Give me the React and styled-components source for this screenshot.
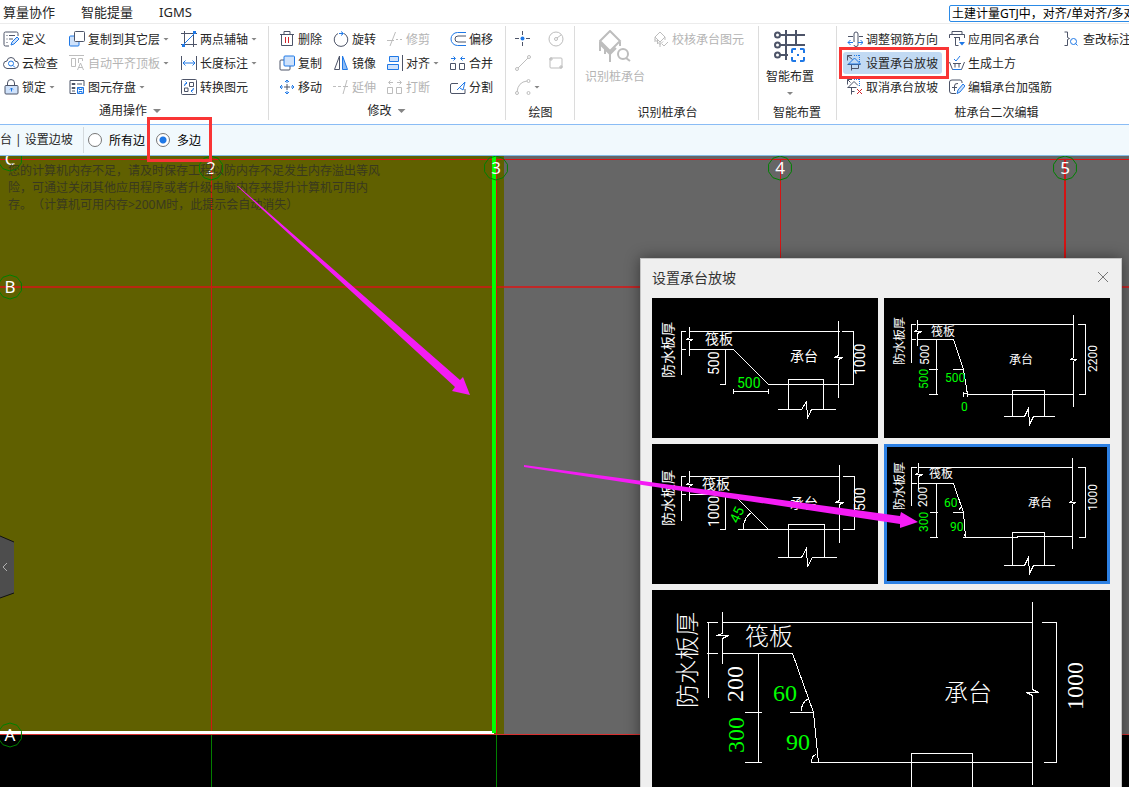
import React, { useState } from 'react';
import styled, { createGlobalStyle, css } from 'styled-components';

const DARK = '#4d5468';
const BLUE = '#1f78e6';
const PALE = '#cfe2fb';
const GREY = '#bdbdbd';

const ICONS = {
  define: (
    <>
      <path d="M15 5V2.500Q15 1 13.500 1h-11Q1 1 1 2.500v11Q1 15 2.500 15H6" stroke={DARK} />
      <path d="M3.500 4.500h1M6 4.500h6M3.500 8h1M6 8h4M3.500 11.500h1" stroke={DARK} />
      <path d="M8 14l1-3 5-5 2 2-5 5z" stroke={BLUE} fill={PALE} />
    </>
  ),
  cloud: (
    <>
      <path d="M4 13.500Q0.500 13 0.500 9.500T4 6Q4.500 2.500 8 2.500T12 6Q15.500 6 15.500 9.500T12 13.500z" stroke={DARK} />
      <circle cx="8" cy="8.500" r="2.500" stroke={BLUE} />
      <path d="M10 10.500l2 2" stroke={BLUE} />
    </>
  ),
  lock: (
    <>
      <path d="M4.500 7V4Q4.500 0.500 8 0.500T11.500 4v3" stroke={DARK} />
      <rect x="2" y="6.500" width="13" height="8.500" rx="1" stroke={DARK} fill={PALE} />
      <path d="M8.500 12.500V9M7 10.500L8.500 9 10 10.500" stroke={BLUE} />
    </>
  ),
  copy: (
    <>
      <path d="M5 5H2Q1 5 1 6v8q0 1 1 1h8q1 0 1-1v-3" stroke={DARK} fill="none" />
      <rect x="5" y="1" width="10.500" height="10" rx="1" stroke={BLUE} fill={PALE} />
    </>
  ),
  copyFloor: (
    <>
      <rect x="0.500" y="5" width="9.500" height="10" rx="1" stroke={BLUE} fill={PALE} />
      <rect x="5.500" y="0.500" width="10" height="10" rx="1" stroke={DARK} fill="#fff" />
    </>
  ),
  alignTop: (
    <>
      <path d="M0 0.500h15M2.500 3.500h4v8h-4zM9.500 8V3.500h4V6" stroke={GREY} />
      <path d="M8.500 15l3-7 3 7M9.500 12.500h4" stroke={GREY} />
    </>
  ),
  save: (
    <>
      <path d="M15 7V1.500H1v13h6" stroke={DARK} />
      <path d="M3 4.500h3v1H3zM3 8.500h3v1H3zM8 5h5M8 9h2M3 12h3" stroke={DARK} />
      <path d="M8.500 8.500h6v6h-6zM10 8.500v2h3v-2M10 14.500v-2h3v2" stroke={BLUE} />
    </>
  ),
  axis: (
    <>
      <path d="M3.500 0v16M12.500 0v16M0 2.500h16M0 13.500h16" stroke={DARK} />
      <path d="M2 14L14 2" stroke={BLUE} />
      <path d="M1 13h3v3H1zM12 0h3v3h-3z" fill={BLUE} stroke="none" />
    </>
  ),
  measure: (
    <>
      <path d="M0.500 1v14M15.500 1v14" stroke={DARK} />
      <path d="M2 8h12M4.500 5.500L2 8l2.500 2.500M11.500 5.500L14 8l-2.500 2.500" stroke={BLUE} />
    </>
  ),
  convert: (
    <>
      <rect x="0.500" y="0.500" width="15" height="15" rx="1" stroke={DARK} />
      <path d="M8.500 3.500h4v4h-4zM3.500 9h3.500v3.500H3.500z" stroke={DARK} />
      <path d="M3.500 7q0-3 2.500-3M4.500 2.500L6 4 4.500 5.500M12.500 9q0 3-2.500 3M11.500 10.500L10 12l1.500 1.500" stroke={BLUE} />
    </>
  ),
  trash: (
    <>
      <path d="M1 3.500h14M5 3.500V0.500h6v3M2.500 3.500V14.500h11V3.500" stroke={DARK} />
      <path d="M6.500 6v6M9.500 6v6" stroke="#d2232a" />
    </>
  ),
  rotate: (
    <>
      <path d="M11 2.500A6.800 6.800 0 1 1 5 2.500" stroke={DARK} />
      <path d="M6 2.500h4M8 0.500l2.500 2L8 4.500" stroke={BLUE} />
    </>
  ),
  trim: <path d="M0 9.500h7M3 15L8.500 1M9 8.500h2M13 8.500h2" stroke={GREY} />,
  extend: <path d="M0 7.500h3M5 7.500h3M10 7.500h5M10 15l4-14" stroke={GREY} />,
  offset: (
    <>
      <path d="M16 1.500H7.500a6.500 6.500 0 0 0 0 13H16" stroke={BLUE} />
      <path d="M16 5H8a3 3 0 0 0 0 6h8" stroke={DARK} />
    </>
  ),
  mirror: (
    <>
      <path d="M6.500 1v13.500h-5z" stroke={DARK} />
      <path d="M9.500 1v13.500h5z" stroke={BLUE} fill="#8fbdf5" />
    </>
  ),
  align: (
    <>
      <path d="M15.500 0v16" stroke={DARK} />
      <path d="M2.500 1.500h9v5h-9zM0.500 9.500h11v5H0.500z" stroke={BLUE} fill={PALE} />
    </>
  ),
  merge: (
    <>
      <path d="M0.500 8.500h5v6H0.500zM9.500 8.500h5v6h-5z" stroke={DARK} />
      <path d="M1 3.500h4M3.500 1.500l2 2-2 2M15 3.500h-4M12.500 1.500l-2 2 2 2" stroke={BLUE} />
    </>
  ),
  split2: (
    <>
      <path d="M0.500 8.500h5v6H0.500zM9.500 8.500h5v6h-5z" stroke={GREY} />
      <path d="M2 3.500h4M3.500 1.500l-2 2 2 2M14 3.500h-4M12.500 1.500l2 2-2 2" stroke={GREY} />
    </>
  ),
  move: (
    <>
      <path d="M8 5v6M5 8h6" stroke={DARK} />
      <path d="M8 1v3M8 15v-3M1 8h3M15 8h-3M6 3l2-2 2 2M6 13l2 2 2-2M3 6L1 8l2 2M13 6l2 2-2 2" stroke={BLUE} />
    </>
  ),
  cut: (
    <>
      <path d="M8 4.500H2Q0.500 4.500 0.500 6v7q0 1.500 1.500 1.500h13V10" stroke={DARK} />
      <path d="M7 11l8-8-2 8-3-2" stroke={BLUE} />
    </>
  ),
  point: (
    <>
      <path d="M7.500 0v4M7.500 11v4M0 7.500h4M11 7.500h4" stroke={DARK} />
      <circle cx="7.500" cy="7.500" r="2" fill={BLUE} stroke="none" />
    </>
  ),
  circle: (
    <>
      <circle cx="8" cy="8" r="7" stroke={GREY} />
      <circle cx="8" cy="8" r="1.500" stroke={GREY} />
      <path d="M9 7l4-3" stroke={GREY} />
    </>
  ),
  line: (
    <>
      <path d="M3 13L13 3" stroke={GREY} />
      <circle cx="2" cy="14" r="1.500" stroke={GREY} />
      <circle cx="14" cy="2" r="1.500" stroke={GREY} />
    </>
  ),
  rect: (
    <>
      <rect x="2" y="3" width="12" height="10" rx="1" stroke={GREY} />
      <path d="M2 3h2v2H2zM12 11h2v2h-2z" stroke={GREY} />
    </>
  ),
  arc: (
    <>
      <path d="M2 13Q3 3 12 2" stroke={GREY} />
      <circle cx="2" cy="14" r="1.500" stroke={GREY} />
      <circle cx="13.500" cy="2" r="1.500" stroke={GREY} />
      <circle cx="13.500" cy="14" r="1.500" stroke={GREY} />
    </>
  ),
  check: (
    <>
      <path d="M7 1l5 5-5 5-5-5zM2 6v5M4.500 9v4M7 11v5M12 6v3M2 8.500l5 5 3-3" stroke={GREY} />
      <path d="M9 13l2 2 4-4" stroke={GREY} />
    </>
  ),
  steel: (
    <>
      <path d="M7 11V3q0-2 2-2t2 2v11q0 1.500-2 1.500T7 14M1 5.500h5M12 5.500h4" stroke={DARK} />
      <path d="M1 11.500h5M3.500 9L1 11.500 3.500 14M11 11.500h5M13.500 9l2.500 2.500-2.500 2.500" stroke={BLUE} />
    </>
  ),
  slope: (
    <>
      <path d="M5 0.500H0.500v5M0.500 0.500l5 4M0.500 9.500h13M4.500 9.500v6M11.500 9.500v4h-7" stroke={DARK} />
      <path d="M1.500 9l6-6 6 6z" stroke={BLUE} />
      <path d="M7 0.500h6M12.500 0v7" stroke={BLUE} strokeDasharray="1 1" />
    </>
  ),
  slopeOff: (
    <>
      <path d="M5 0.500H0.500v5M0.500 0.500l3 3M1 8.500L7 2.500l4 4M0.500 8.500h9M4.500 8.500v7M4.500 12.500h3" stroke={DARK} />
      <path d="M7 0.500h6M12.500 0v7" stroke={BLUE} strokeDasharray="1 1" />
      <path d="M10 10l5 5M15 10l-5 5" stroke="#d2232a" />
    </>
  ),
  sameName: (
    <>
      <path d="M3 0.500h10v3H3zM0.500 7V3.500h15V7M5 6.500h6M6.500 6.500V14.500h3M10.500 6.500v3" stroke={DARK} />
      <path d="M10 11h6l-3 3.500z" fill={BLUE} stroke="none" />
    </>
  ),
  earth: (
    <>
      <path d="M0.500 7l3 7.500h9l3-7.500M4 8.500h8M6 8.500v4M10 8.500v4" stroke={DARK} />
      <path d="M5 4l2 2 4-5M4 14.500h8" stroke={BLUE} />
    </>
  ),
  editBar: (
    <>
      <path d="M13 4V3q0-2-2-2H3Q0.500 1 0.500 3v9q0 2.500 2.500 2.500h4" stroke={DARK} />
      <path d="M9 4.500Q5.500 4 5.500 7v5M3 8.500h5" stroke={DARK} />
      <path d="M8 14.500l1-3.500 5-6 2 2-5 6z" stroke={BLUE} fill={PALE} />
    </>
  ),
  queryMark: (
    <>
      <path d="M0.500 1H3.500v5.500l2 1-2 1V14.500H0.500" stroke={DARK} />
      <circle cx="9.500" cy="10.500" r="3" stroke={BLUE} />
      <path d="M11.500 12.500l2 2" stroke={BLUE} />
    </>
  ),
};

const Icon = ({ name }) => (
  <IconSvg viewBox="0 0 16 16" aria-hidden="true">
    {ICONS[name]}
  </IconSvg>
);

const Tool = ({ icon, label, arrow, disabled, active }) => (
  <ToolBtn disabled={disabled} $active={active} aria-label={label || icon}>
    <Icon name={icon} />
    {label && <span>{label}</span>}
    {arrow && <Caret />}
    {active && <ToolMark />}
  </ToolBtn>
);

const COMMON = [
  { icon: 'define', label: '定义' },
  { icon: 'copyFloor', label: '复制到其它层', arrow: true },
  { icon: 'axis', label: '两点辅轴', arrow: true },
  { icon: 'cloud', label: '云检查' },
  { icon: 'alignTop', label: '自动平齐顶板', arrow: true, disabled: true },
  { icon: 'measure', label: '长度标注', arrow: true },
  { icon: 'lock', label: '锁定', arrow: true },
  { icon: 'save', label: '图元存盘', arrow: true },
  { icon: 'convert', label: '转换图元' },
];

const MODIFY = [
  { icon: 'trash', label: '删除' },
  { icon: 'rotate', label: '旋转' },
  { icon: 'trim', label: '修剪', disabled: true },
  { icon: 'offset', label: '偏移' },
  { icon: 'copy', label: '复制' },
  { icon: 'mirror', label: '镜像' },
  { icon: 'align', label: '对齐', arrow: true },
  { icon: 'merge', label: '合并' },
  { icon: 'move', label: '移动' },
  { icon: 'extend', label: '延伸', disabled: true },
  { icon: 'split2', label: '打断', disabled: true },
  { icon: 'cut', label: '分割' },
];

const DRAW = [
  { icon: 'point' },
  { icon: 'circle', disabled: true },
  { icon: 'line', disabled: true },
  { icon: 'rect', disabled: true },
  { icon: 'arc', arrow: true, disabled: true },
];

const CAP_EDIT = [
  { icon: 'steel', label: '调整钢筋方向' },
  { icon: 'sameName', label: '应用同名承台' },
  { icon: 'queryMark', label: '查改标注' },
  { icon: 'slope', label: '设置承台放坡', active: true },
  { icon: 'earth', label: '生成土方' },
  null,
  { icon: 'slopeOff', label: '取消承台放坡' },
  { icon: 'editBar', label: '编辑承台加强筋' },
];

const Tools = ({ items, columns }) => (
  <ToolGrid $columns={columns}>
    {items.map((item, i) =>
      item ? <Tool key={item.icon} {...item} /> : <span key={i} />,
    )}
  </ToolGrid>
);

// label: [text, x, y, rotation, green]
const FIGURES = [
  {
    id: 'single-width',
    width: 226,
    height: 140,
    size: 14,
    path: `M29 33V76M28 33H33M28 51H33M37 28V39L34 41H40L37 43V57M37 33H187
      M37 51H81L116 86H186M73 51V86H67M81 90V95M81 93H116M116 90V95
      M186 22V57L182 59H190L186 61V99M189 33H201V86H187
      M136 111V81H171V111M125 111H149L154 103L155 120L159 111H183`,
    labels: [
      ['防水板厚', 21, 80, -90],
      ['筏板', 53, 46],
      ['500', 67, 77, -90],
      ['500', 85, 90, 0, true],
      ['承台', 138, 63],
      ['1000', 213, 77, -90],
    ],
  },
  {
    id: 'multi-width',
    width: 226,
    height: 140,
    size: 12,
    path: `M31 26H27V64M27 41H31M33 21V31L30 33H37L33 35V47M33 26H189
      M33 41H69L79 71L83 96H189M52 41V96M44 71H53M44 96H53M68 71H79
      M79 93V98M79 95H83M83 93V98M189 16V59L186 61H192L189 63V108
      M193 26H201V96H194M128 118V92H160V118M119 118H140L144 110L145 126L149 118H170`,
    labels: [
      ['防水板厚', 20, 67, -90],
      ['筏板', 47, 38],
      ['500', 45, 67, -90],
      ['500', 44, 91, -90, true],
      ['500', 61, 84, 0, true],
      ['0', 77, 113, 0, true],
      ['承台', 125, 66],
      ['2200', 213, 74, -90],
    ],
  },
  {
    id: 'single-angle',
    width: 226,
    height: 140,
    size: 14,
    path: `M29 32V76M28 32H33M28 50H33M37 26V38L34 40H40L37 42V56M37 32H187
      M37 50H81L116 85M85 85H187M73 50V85H67M91 84Q91 73 99 68
      M187 20V56L183 58H191L187 60V98M190 32H202V85H190
      M136 113V80H172V113M125 113H149L154 104L155 122L160 113H184`,
    labels: [
      ['防水板厚', 21, 82, -90],
      ['筏板', 50, 45],
      ['1000', 67, 83, -90],
      ['45', 86, 80, -65, true],
      ['承台', 138, 64],
      ['500', 213, 67, -90],
    ],
  },
  {
    id: 'multi-angle',
    width: 226,
    height: 140,
    size: 12,
    path: `M26 23H32M27 23V61M26 39H32M34 18V28L31 30H38L34 32V44M34 23H188
      M34 39H69L79 68L81 93M78 93H133V92H188M52 39V93M45 68H53M45 93H53M68 68H79
      M77 62L74 66M79 92L81 89M188 13V56L185 58H191L188 60V104
      M193 23H201V93H194M128 121V88H160V121M119 121H140L144 113L145 129L149 121H170`,
    labels: [
      ['防水板厚', 20, 66, -90],
      ['筏板', 45, 34],
      ['200', 43, 63, -90],
      ['300', 44, 88, -90, true],
      ['60', 60, 63, 0, true],
      ['90', 66, 87, 0, true],
      ['承台', 144, 63],
      ['1000', 213, 67, -90],
    ],
  },
];

const PREVIEW = {
  width: 458,
  height: 280,
  size: 24,
  large: true,
  path: `M54 32H65M56 32V107M54 63H65M70 21V43L64 45H76L70 48V73M70 32H380
    M70 63H140L161 122L166 172M159 172H380M106 62V172M92 122H109M92 172H109
    M137 122H161M156 108Q149 112 149 120M164 164Q159 165 159 172
    M380 11V99L386 102H374L380 105V194M389 32H404V172H391
    M259 226V163H320V226M235 226H284L290 208L294 244L300 226H345`,
  labels: [
    ['防水板厚', 44, 118, -90],
    ['筏板', 93, 55],
    ['200', 91, 112, -90],
    ['300', 92, 163, -90, true],
    ['60', 121, 111, 0, true],
    ['90', 134, 160, 0, true],
    ['承台', 292, 111],
    ['1000', 431, 120, -90],
  ],
};

const Figure = ({ figure }) => (
  <FigureSvg viewBox={`0 0 ${figure.width} ${figure.height}`}>
    <g transform="translate(0.5 0.5)">
      <path d={figure.path} />
    </g>
    {figure.labels.map(([text, x, y, angle = 0, green]) => (
      <FigureText
        key={text + x + y}
        transform={`translate(${x} ${y}) rotate(${angle})`}
        $size={figure.size}
        $large={figure.large}
        $green={green}
      >
        {text}
      </FigureText>
    ))}
  </FigureSvg>
);

const AXES = [
  ['C', 10, 159],
  ['B', 10, 287],
  ['A', 10, 735],
  ['2', 211, 168],
  ['3', 496, 168],
  ['4', 780, 168],
  ['5', 1065, 168],
];

// x and line width of each vertical axis
const COLUMNS = [
  [211, 1],
  [496, 1],
  [780, 1],
  [1064, 2],
];

const ring = (cx, cy) =>
  Array.from({ length: 10 }, (_, i) => {
    const a = (i * Math.PI) / 5 - Math.PI / 2;
    return `${cx + 12 * Math.cos(a)},${cy + 12 * Math.sin(a)}`;
  }).join(' ');

const Drawing = () => (
  <Scene viewBox="0 156 1129 631" preserveAspectRatio="xMinYMin slice">
    <rect x="0" y="156" width="1129" height="579" fill="#666" />
    <rect x="0" y="156" width="504" height="579" fill="#606000" />
    <rect x="0" y="735" width="1129" height="52" fill="#000" />
    <g shapeRendering="crispEdges">
      <rect x="0" y="159" width="1129" height="1" fill="#e01010" />
      <rect x="0" y="286" width="1129" height="2" fill="#b82810" />
      <rect x="504" y="286" width="625" height="2" fill="#c02828" />
      {COLUMNS.map(([x, width]) => (
        <g key={x}>
          <rect x={x} y="159" width={width} height="576" fill="#d41414" />
          <rect x={x} y="735" width="1" height="52" fill="#008000" />
        </g>
      ))}
      <rect x="0" y="734" width="1129" height="1" fill="#d83030" />
      <rect x="0" y="731" width="494" height="3" fill="#fff" />
      <rect x="492" y="156" width="4" height="577" fill="#00ff00" />
    </g>
    {AXES.map(([name, x, y]) => (
      <g key={name}>
        <polygon points={ring(x, y)} fill="none" stroke="#008000" />
        <AxisText x={x} y={y + 6}>
          {name}
        </AxisText>
      </g>
    ))}
  </Scene>
);

const Arrows = () => (
  <Overlay viewBox="0 156 1129 631" preserveAspectRatio="xMinYMin slice">
    <g fill="#f41cf4">
      <polygon points="237,186 238,186 460,380 463,377 470,395 452,391 455,387" />
      <polygon points="524,465 900,516 901,512 918,522 900,528 900,524 524,467" />
    </g>
  </Overlay>
);

export default function App() {
  const [edge, setEdge] = useState('multi');
  const [selected, setSelected] = useState('multi-angle');
  const [keyword, setKeyword] = useState('土建计量GTJ中，对齐/单对齐/多对齐');

  return (
    <Page>
      <GlobalStyle />
      <MenuBar>
        <MenuTab>算量协作</MenuTab>
        <MenuTab>智能提量</MenuTab>
        <MenuTab>IGMS</MenuTab>
        <Search
          aria-label="搜索"
          value={keyword}
          onChange={(e) => setKeyword(e.target.value)}
        />
      </MenuBar>

      <Ribbon>
        <Group $width={269} $pad={3}>
          <Tools items={COMMON} columns="66px 112px auto" />
          <Caption $menu>
            通用操作
            <Caret $big />
          </Caption>
        </Group>
        <Group $width={237} $pad={10}>
          <Tools items={MODIFY} columns="54px 54px 63px auto" />
          <Caption $menu>
            修改
            <Caret $big />
          </Caption>
        </Group>
        <Group $width={69} $pad={9}>
          <Tools items={DRAW} columns="33px auto" />
          <Caption>绘图</Caption>
        </Group>
        <Group $width={184} $pad={10}>
          <BigRow>
            <BigBtn disabled>
              <svg width="32" height="32" viewBox="0 0 32 32" aria-hidden="true">
                <path
                  d="M11 1l10 10-10 10L1 11zM1 12v9M6 17v7M11 21v11M21 12v4M1 14l10 10 6-6"
                  stroke={GREY}
                  strokeWidth="2"
                />
                <circle cx="24" cy="24" r="5" stroke={GREY} strokeWidth="2" />
                <path d="M27 28l4 3" stroke={GREY} strokeWidth="2" />
              </svg>
              识别桩承台
            </BigBtn>
            <Tool icon="check" label="校核承台图元" disabled />
          </BigRow>
          <Caption>识别桩承台</Caption>
        </Group>
        <Group $width={78} $pad={7}>
          <BigRow>
            <BigBtn>
              <svg width="32" height="32" viewBox="0 0 32 32" aria-hidden="true">
                <path
                  d="M12 0v30M22 0v15M6 5h25M6 15h25M6 25h8"
                  stroke={DARK}
                  strokeWidth="2"
                />
                <path
                  d="M1 5a2 2 0 1 0 5 0a2 2 0 1 0-5 0M1 15a2 2 0 1 0 5 0a2 2 0 1 0-5 0M1 25a2 2 0 1 0 5 0a2 2 0 1 0-5 0"
                  stroke={DARK}
                  strokeWidth="2"
                />
                <path
                  d="M18 23v-3q0-1 1-1h3M26 19h3q1 0 1 1v3M30 27v3q0 1-1 1h-3M22 31h-3q-1 0-1-1v-3M23 25h2"
                  stroke={BLUE}
                  strokeWidth="2"
                />
              </svg>
              智能布置
              <Caret />
            </BigBtn>
          </BigRow>
          <Caption>智能布置</Caption>
        </Group>
        <Group $width={318} $pad={10}>
          <Tools items={CAP_EDIT} columns="102px 115px auto" />
          <Caption>桩承台二次编辑</Caption>
        </Group>
      </Ribbon>

      <OptionBar>
        <OptionTitle>台 | 设置边坡</OptionTitle>
        <Option>
          <Radio
            type="radio"
            name="edge"
            checked={edge === 'all'}
            onChange={() => setEdge('all')}
          />
          所有边
        </Option>
        <Option>
          <Radio
            type="radio"
            name="edge"
            checked={edge === 'multi'}
            onChange={() => setEdge('multi')}
          />
          多边
          <OptionMark />
        </Option>
      </OptionBar>

      <Canvas>
        <Drawing />
        <Warning>
          您的计算机内存不足，请及时保存工程以防内存不足发生内存溢出等风
          <br />
          险，可通过关闭其他应用程序或者升级电脑内存来提升计算机可用内
          <br />
          存。（计算机可用内存&gt;200M时，此提示会自动消失）
        </Warning>
        <Handle aria-label="展开">
          <svg width="15" height="64" viewBox="0 0 15 64">
            <path d="M0 1l14 6v51l-14 5" fill="#4d4d4d" />
            <path d="M0 1l14 6M14 58l-14 5" stroke="#111" />
            <path d="M7 28l-4 4 4 4" stroke="#b0b0b0" />
          </svg>
        </Handle>
        <Dialog role="dialog" aria-labelledby="dialog-title">
          <DialogHeader>
            <h2 id="dialog-title">设置承台放坡</h2>
            <CloseBtn aria-label="关闭">
              <svg width="12" height="12" viewBox="0 0 12 12">
                <path d="M1 1l10 10M11 1L1 11" stroke="#777" />
              </svg>
            </CloseBtn>
          </DialogHeader>
          <Thumbs>
            {FIGURES.map((figure) => (
              <Thumb
                key={figure.id}
                aria-label={figure.id}
                $selected={figure.id === selected}
                onClick={() => setSelected(figure.id)}
              >
                <Figure figure={figure} />
              </Thumb>
            ))}
            <Preview>
              <Figure figure={PREVIEW} />
            </Preview>
          </Thumbs>
        </Dialog>
        <Arrows />
      </Canvas>
    </Page>
  );
}

const GlobalStyle = createGlobalStyle`
  * {
    box-sizing: border-box;
  }

  body {
    margin: 0;
    overflow: hidden;
  }

  body, button, input {
    font-family: 'Noto Sans', 'Noto Sans CJK SC', sans-serif;
    font-size: 12px;
    color: #262626;
  }

  button {
    padding: 0;
    border: 0;
    background: none;
  }

  svg {
    display: block;
    fill: none;
  }
`;

const Page = styled.div`
  display: flex;
  flex-direction: column;
  height: 100vh;
  overflow: hidden;
  background: #fff;
`;

const MenuBar = styled.nav`
  display: flex;
  align-items: center;
  gap: 26px;
  height: 24px;
  flex: none;
  padding-left: 3px;
  border-bottom: 1px solid #ececec;
`;

const MenuTab = styled.button`
  flex: none;
  font-size: 13px;
  line-height: 20px;
`;

const Search = styled.input`
  flex: none;
  width: 200px;
  height: 17px;
  margin: 3px -20px 0 auto;
  padding: 0 2px;
  border: 1px solid #2b8ae6;
  border-radius: 2px;
  color: #000;
`;

const Ribbon = styled.div`
  display: flex;
  flex: none;
  height: 100px;
  padding: 2px 0 4px;
`;

const Group = styled.section`
  display: flex;
  flex-direction: column;
  justify-content: space-between;
  flex: none;
  width: ${(props) => props.$width}px;
  padding: 1px 0 0 ${(props) => props.$pad}px;
  border-right: 1px solid #dcdcdc;
`;

const ToolGrid = styled.div`
  display: grid;
  grid-template-columns: ${(props) => props.$columns};
  grid-auto-rows: 24px;
`;

const ToolBtn = styled.button`
  position: relative;
  display: flex;
  align-items: center;
  justify-self: start;
  gap: 3px;
  height: 24px;
  white-space: nowrap;

  &:disabled {
    color: #b4b4b4;
  }

  ${(props) =>
    props.$active &&
    css`
      height: 22px;
      align-self: center;
      margin-left: -4px;
      padding: 0 4px;
      border-radius: 3px;
      background: #c2daf3;
    `}
`;

const ToolMark = styled.span`
  position: absolute;
  inset: -5px -7px -5px -4px;
  z-index: 1;
  border: 3px solid #f93535;
`;

const IconSvg = styled.svg`
  flex: none;
  width: 16px;
  height: 16px;
`;

const Caret = styled.i`
  flex: none;
  width: ${(props) => (props.$big ? 8 : 6)}px;
  height: ${(props) => (props.$big ? 4 : 3)}px;
  background: #858585;
  clip-path: polygon(0 0, 100% 0, 50% 100%);
`;

const Caption = styled.div`
  display: flex;
  align-items: center;
  justify-content: center;
  gap: 6px;
  height: 18px;
  margin-left: ${(props) => (props.$menu ? -11 : -8)}px;
  padding-top: ${(props) => (props.$menu ? 0 : 3)}px;
  line-height: 16px;
`;

const BigRow = styled.div`
  display: flex;
  align-items: flex-start;
  gap: 8px;
`;

const BigBtn = styled.button`
  display: flex;
  flex-direction: column;
  align-items: center;
  gap: 5px;
  padding-top: 3px;
  line-height: 20px;

  &:disabled {
    color: #b4b4b4;
  }
`;

const OptionBar = styled.div`
  display: flex;
  align-items: center;
  flex: none;
  height: 32px;
  border-top: 1px solid #8abcf5;
  border-bottom: 1px solid #86bde6;
  background: #f1f9fd;
`;

const OptionTitle = styled.span`
  width: 84px;
  line-height: 26px;
  border-right: 1px solid #d4dadd;
`;

const Option = styled.label`
  position: relative;
  display: flex;
  align-items: center;
  gap: 7px;
  margin-left: 4px;
  padding-right: 7px;
  color: #000;
`;

const OptionMark = styled.span`
  position: absolute;
  inset: -14px -4px -13px -9px;
  z-index: 2;
  border: 3px solid #f93535;
`;

const Radio = styled.input`
  appearance: none;
  width: 14px;
  height: 14px;
  margin: 0;
  border: 1px solid #777;
  border-radius: 50%;
  background: #fff;

  &:checked {
    background: radial-gradient(circle, ${BLUE} 3px, #fff 4px);
  }
`;

const Canvas = styled.main`
  position: relative;
  flex: 1;
  min-height: 0;
  overflow: hidden;
  background: #000;
`;

const Scene = styled.svg`
  position: absolute;
  inset: 0;
  width: 100%;
  height: 100%;
`;

const Overlay = styled(Scene)`
  pointer-events: none;
`;

const AxisText = styled.text`
  font-family: 'Noto Sans', sans-serif;
  font-size: 17px;
  fill: #fff;
  text-anchor: middle;
`;

const Warning = styled.p`
  position: relative;
  margin: 6px 8px;
  line-height: 17px;
  color: #39391f;
  white-space: nowrap;
  text-spacing-trim: space-all;
`;

const Handle = styled.button`
  position: absolute;
  left: 0;
  top: 60%;
`;

const Dialog = styled.div`
  position: absolute;
  top: 102px;
  right: 7px;
  width: 482px;
  padding: 0 11px 12px;
  border: 1px solid #c4c4c4;
  background: #efefef;
  box-shadow: 0 0 14px rgba(0, 0, 0, 0.45);
`;

const DialogHeader = styled.header`
  display: flex;
  align-items: center;
  justify-content: space-between;
  height: 36px;
  margin-bottom: 3px;

  h2 {
    margin: 0;
    font-size: 14px;
    font-weight: normal;
    color: #333;
  }
`;

const CloseBtn = styled.button`
  padding: 1px;
`;

const Thumbs = styled.div`
  display: grid;
  grid-template-columns: 1fr 1fr;
  gap: 6px;
`;

const Thumb = styled.button`
  background: #000;
  box-shadow: ${(props) => (props.$selected ? 'inset 0 0 0 3px #2d80e2' : 'none')};
`;

const Preview = styled.div`
  grid-column: span 2;
  background: #000;
`;

const FigureSvg = styled.svg`
  width: 100%;
  stroke: #fff;
  shape-rendering: crispEdges;
`;

const FigureText = styled.text`
  font-family: ${(props) => (props.$large ? "'Liberation Serif'" : 'Roboto')},
    'Noto Sans CJK SC', sans-serif;
  font-size: ${(props) => props.$size}px;
  font-weight: ${(props) => (props.$large ? 300 : 400)};
  fill: ${(props) => (props.$green ? '#00ff00' : '#fff')};
  stroke: none;
`;
